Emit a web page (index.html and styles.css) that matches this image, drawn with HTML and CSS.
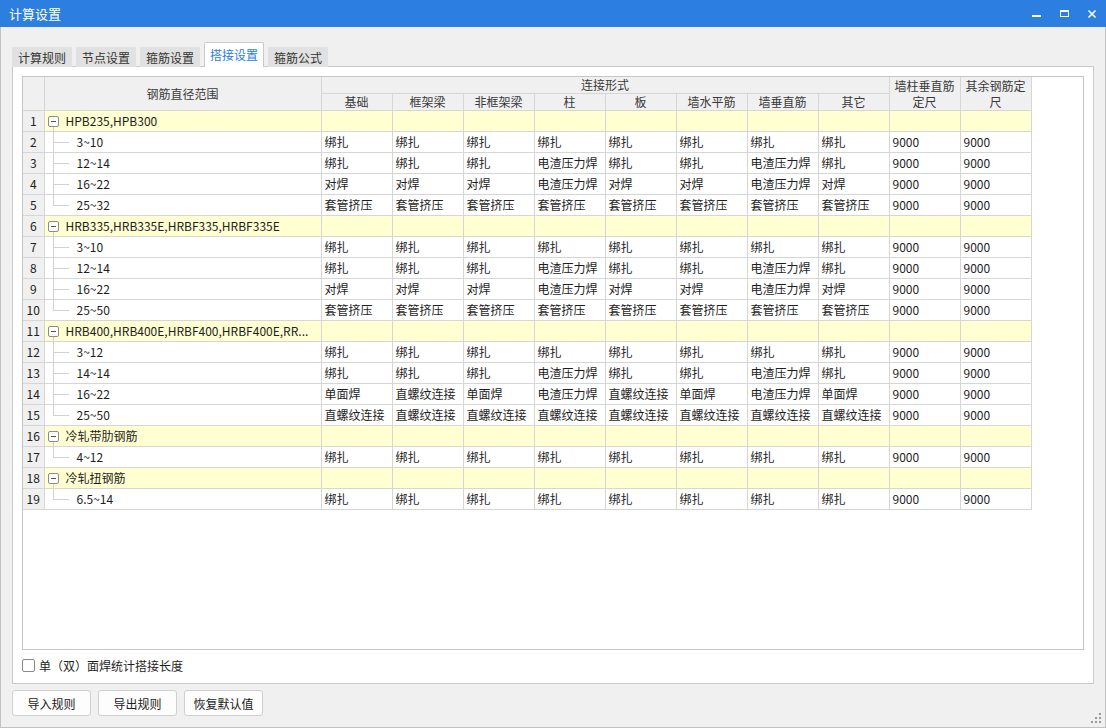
FILE: index.html
```html
<!DOCTYPE html>
<html lang="zh">
<head>
<meta charset="utf-8">
<title>计算设置</title>
<link rel="stylesheet" href="styles.css">
</head>
<body>
<div class="window">
  <div class="titlebar">
    <span class="title">计算设置</span>
    <div class="winbtns">
      <svg class="wb" width="28" height="27" viewBox="0 0 28 27"><rect x="10" y="15" width="9" height="2" fill="#fff"/></svg>
      <svg class="wb" width="28" height="27" viewBox="0 0 28 27"><rect x="10.5" y="10.5" width="8" height="6" fill="none" stroke="#fff" stroke-width="1"/><rect x="10" y="10" width="9" height="2" fill="#fff"/></svg>
      <svg class="wb" width="28" height="27" viewBox="0 0 28 27"><path d="M10.5 10.5 L17.5 17.5 M17.5 10.5 L10.5 17.5" stroke="#fff" stroke-width="1.6" fill="none"/></svg>
    </div>
  </div>
  <div class="body">
    <div class="tabs">
      <div class="tab">计算规则</div>
      <div class="tab">节点设置</div>
      <div class="tab">箍筋设置</div>
      <div class="tab active">搭接设置</div>
      <div class="tab">箍筋公式</div>
    </div>
    <div class="panel">
      <div class="grid">
        <table class="tbl">
          <colgroup>
            <col class="c-num"><col class="c-name">
            <col class="c-d"><col class="c-d"><col class="c-d"><col class="c-d"><col class="c-d"><col class="c-d"><col class="c-d"><col class="c-d">
            <col class="c-d"><col class="c-d">
          </colgroup>
          <thead>
            <tr class="h1">
              <th class="hnum" rowspan="2"></th>
              <th rowspan="2">钢筋直径范围</th>
              <th colspan="8">连接形式</th>
              <th rowspan="2" class="wrap">墙柱垂直筋定尺</th>
              <th rowspan="2" class="wrap">其余钢筋定尺</th>
            </tr>
            <tr class="h2">
              <th>基础</th><th>框架梁</th><th>非框架梁</th><th>柱</th><th>板</th><th>墙水平筋</th><th>墙垂直筋</th><th>其它</th>
            </tr>
          </thead>
          <tbody>
            <tr class="grp"><td class="num">1</td><td class="name"><div class="nm"><span class="tcol"><span class="toggle"></span></span><span class="gtxt">HPB235,HPB300</span></div></td><td></td><td></td><td></td><td></td><td></td><td></td><td></td><td></td><td></td><td></td></tr>
            <tr><td class="num">2</td><td class="name"><div class="nm"><span class="branch"></span>3~10</div></td><td>绑扎</td><td>绑扎</td><td>绑扎</td><td>绑扎</td><td>绑扎</td><td>绑扎</td><td>绑扎</td><td>绑扎</td><td>9000</td><td>9000</td></tr>
            <tr><td class="num">3</td><td class="name"><div class="nm"><span class="branch"></span>12~14</div></td><td>绑扎</td><td>绑扎</td><td>绑扎</td><td>电渣压力焊</td><td>绑扎</td><td>绑扎</td><td>电渣压力焊</td><td>绑扎</td><td>9000</td><td>9000</td></tr>
            <tr><td class="num">4</td><td class="name"><div class="nm"><span class="branch"></span>16~22</div></td><td>对焊</td><td>对焊</td><td>对焊</td><td>电渣压力焊</td><td>对焊</td><td>对焊</td><td>电渣压力焊</td><td>对焊</td><td>9000</td><td>9000</td></tr>
            <tr><td class="num">5</td><td class="name"><div class="nm"><span class="branch last"></span>25~32</div></td><td>套管挤压</td><td>套管挤压</td><td>套管挤压</td><td>套管挤压</td><td>套管挤压</td><td>套管挤压</td><td>套管挤压</td><td>套管挤压</td><td>9000</td><td>9000</td></tr>
            <tr class="grp"><td class="num">6</td><td class="name"><div class="nm"><span class="tcol"><span class="toggle"></span></span><span class="gtxt">HRB335,HRB335E,HRBF335,HRBF335E</span></div></td><td></td><td></td><td></td><td></td><td></td><td></td><td></td><td></td><td></td><td></td></tr>
            <tr><td class="num">7</td><td class="name"><div class="nm"><span class="branch"></span>3~10</div></td><td>绑扎</td><td>绑扎</td><td>绑扎</td><td>绑扎</td><td>绑扎</td><td>绑扎</td><td>绑扎</td><td>绑扎</td><td>9000</td><td>9000</td></tr>
            <tr><td class="num">8</td><td class="name"><div class="nm"><span class="branch"></span>12~14</div></td><td>绑扎</td><td>绑扎</td><td>绑扎</td><td>电渣压力焊</td><td>绑扎</td><td>绑扎</td><td>电渣压力焊</td><td>绑扎</td><td>9000</td><td>9000</td></tr>
            <tr><td class="num">9</td><td class="name"><div class="nm"><span class="branch"></span>16~22</div></td><td>对焊</td><td>对焊</td><td>对焊</td><td>电渣压力焊</td><td>对焊</td><td>对焊</td><td>电渣压力焊</td><td>对焊</td><td>9000</td><td>9000</td></tr>
            <tr><td class="num">10</td><td class="name"><div class="nm"><span class="branch last"></span>25~50</div></td><td>套管挤压</td><td>套管挤压</td><td>套管挤压</td><td>套管挤压</td><td>套管挤压</td><td>套管挤压</td><td>套管挤压</td><td>套管挤压</td><td>9000</td><td>9000</td></tr>
            <tr class="grp"><td class="num">11</td><td class="name"><div class="nm"><span class="tcol"><span class="toggle"></span></span><span class="gtxt">HRB400,HRB400E,HRBF400,HRBF400E,RR...</span></div></td><td></td><td></td><td></td><td></td><td></td><td></td><td></td><td></td><td></td><td></td></tr>
            <tr><td class="num">12</td><td class="name"><div class="nm"><span class="branch"></span>3~12</div></td><td>绑扎</td><td>绑扎</td><td>绑扎</td><td>绑扎</td><td>绑扎</td><td>绑扎</td><td>绑扎</td><td>绑扎</td><td>9000</td><td>9000</td></tr>
            <tr><td class="num">13</td><td class="name"><div class="nm"><span class="branch"></span>14~14</div></td><td>绑扎</td><td>绑扎</td><td>绑扎</td><td>电渣压力焊</td><td>绑扎</td><td>绑扎</td><td>电渣压力焊</td><td>绑扎</td><td>9000</td><td>9000</td></tr>
            <tr><td class="num">14</td><td class="name"><div class="nm"><span class="branch"></span>16~22</div></td><td>单面焊</td><td>直螺纹连接</td><td>单面焊</td><td>电渣压力焊</td><td>直螺纹连接</td><td>单面焊</td><td>电渣压力焊</td><td>单面焊</td><td>9000</td><td>9000</td></tr>
            <tr><td class="num">15</td><td class="name"><div class="nm"><span class="branch last"></span>25~50</div></td><td>直螺纹连接</td><td>直螺纹连接</td><td>直螺纹连接</td><td>直螺纹连接</td><td>直螺纹连接</td><td>直螺纹连接</td><td>直螺纹连接</td><td>直螺纹连接</td><td>9000</td><td>9000</td></tr>
            <tr class="grp"><td class="num">16</td><td class="name"><div class="nm"><span class="tcol"><span class="toggle"></span></span><span class="gtxt">冷轧带肋钢筋</span></div></td><td></td><td></td><td></td><td></td><td></td><td></td><td></td><td></td><td></td><td></td></tr>
            <tr><td class="num">17</td><td class="name"><div class="nm"><span class="branch last"></span>4~12</div></td><td>绑扎</td><td>绑扎</td><td>绑扎</td><td>绑扎</td><td>绑扎</td><td>绑扎</td><td>绑扎</td><td>绑扎</td><td>9000</td><td>9000</td></tr>
            <tr class="grp"><td class="num">18</td><td class="name"><div class="nm"><span class="tcol"><span class="toggle"></span></span><span class="gtxt">冷轧扭钢筋</span></div></td><td></td><td></td><td></td><td></td><td></td><td></td><td></td><td></td><td></td><td></td></tr>
            <tr><td class="num">19</td><td class="name"><div class="nm"><span class="branch last"></span>6.5~14</div></td><td>绑扎</td><td>绑扎</td><td>绑扎</td><td>绑扎</td><td>绑扎</td><td>绑扎</td><td>绑扎</td><td>绑扎</td><td>9000</td><td>9000</td></tr>
          </tbody>
        </table>
      </div>
      <label class="check-row"><span class="checkbox"></span><span>单（双）面焊统计搭接长度</span></label>
    </div>
    <div class="buttons">
      <button class="btn">导入规则</button>
      <button class="btn">导出规则</button>
      <button class="btn">恢复默认值</button>
    </div>
    <svg class="grip" width="12" height="12" viewBox="0 0 12 12">
      <rect x="8" y="0" width="2" height="2" fill="#9a9a9a"/>
      <rect x="4" y="4" width="2" height="2" fill="#9a9a9a"/>
      <rect x="8" y="4" width="2" height="2" fill="#9a9a9a"/>
      <rect x="0" y="8" width="2" height="2" fill="#9a9a9a"/>
      <rect x="4" y="8" width="2" height="2" fill="#9a9a9a"/>
      <rect x="8" y="8" width="2" height="2" fill="#9a9a9a"/>
    </svg>
  </div>
</div>
</body>
</html>
```

FILE: styles.css
```css
* { box-sizing: border-box; }
html, body { margin: 0; padding: 0; }
body {
  width: 1106px;
  height: 728px;
  overflow: hidden;
  background: #f0f0f0;
  font-family: "Noto Sans CJK SC", "Microsoft YaHei", sans-serif;
  font-size: 12px;
  color: #1e1e1e;
}
.window {
  width: 1106px;
  height: 728px;
  display: flex;
  flex-direction: column;
}
.titlebar {
  height: 27px;
  flex: none;
  background: #2c7fe0;
  color: #fff;
  display: flex;
  align-items: center;
  justify-content: space-between;
  padding-left: 9px;
}
.title { font-size: 13px; line-height: 27px; }
.winbtns { display: flex; }
.wb { display: block; }
.body {
  position: relative;
  flex: 1;
  border: 1px solid #c2c2c2;
  border-top: none;
  padding: 15px 11px 0 11px;
  display: flex;
  flex-direction: column;
}
.tabs {
  display: flex;
  align-items: flex-end;
  gap: 4px;
  height: 25px;
  position: relative;
  z-index: 1;
  margin-bottom: -1px;
}
.tab {
  width: 60px;
  height: 20px;
  background: #e1e1e1;
  border: 1px solid #e1e1e1;
  border-bottom: none;
  border-radius: 2px 2px 0 0;
  color: #333;
  text-align: center;
  line-height: 19px;
  font-size: 12px;
}
.tab.active {
  height: 25px;
  background: #fff;
  border-color: #cacaca;
  color: #2a7de1;
  line-height: 24px;
}
.panel {
  background: #fff;
  border: 1px solid #cacaca;
  width: 1082px;
  height: 618px;
  padding: 9px 9px 3px 9px;
  display: flex;
  flex-direction: column;
}
.grid {
  height: 574px;
  flex: none;
  border: 1px solid #c6c6c6;
  background: #fff;
  overflow: hidden;
}
.tbl {
  border-collapse: collapse;
  table-layout: fixed;
  width: 1008px;
  border-top-style: hidden;
  border-left-style: hidden;
}
.c-num { width: 21px; }
.c-name { width: 277px; }
.c-d { width: 71px; }
.tbl th, .tbl td {
  border: 1px solid #d6d6d6;
  padding: 0;
  font-weight: normal;
  white-space: nowrap;
  overflow: hidden;
}
.tbl th {
  background: #f0f0f0;
  color: #3a3a3a;
  text-align: center;
  height: 16px;
  line-height: 16px;
  font-size: 12px;
}
.tbl th.wrap {
  white-space: normal;
  line-height: 16px;
  padding: 0 2px;
}
.tbl td {
  height: 20px;
  line-height: 20px;
  padding-left: 3px;
}
.tbl td.num {
  background: #f0f0f0;
  text-align: center;
  padding: 0;
  color: #222;
}
.tbl tr.grp td { background: #ffffd2; }
.tbl tr.grp td.num { background: #f0f0f0; }
.tbl td.name { padding-left: 0; }
.nm {
  display: flex;
  align-items: center;
  height: 20px;
  overflow: hidden;
}
.tcol {
  width: 11px;
  margin-left: 3px;
  margin-right: 7px;
  align-self: stretch;
  display: flex;
  align-items: center;
  flex: none;
  background: linear-gradient(#d2d2d2, #d2d2d2) center bottom / 1px 50% no-repeat;
}
.toggle {
  width: 11px;
  height: 11px;
  border: 1px solid #8c8c8c;
  border-radius: 2px;
  background: #fff linear-gradient(#555, #555) center / 5px 1px no-repeat;
}
.gtxt {
  white-space: nowrap;
}
.branch {
  width: 16px;
  margin-left: 8px;
  margin-right: 8px;
  align-self: stretch;
  flex: none;
  margin-top: -1px;
  margin-bottom: -1px;
  background:
    linear-gradient(#d2d2d2, #d2d2d2) left top / 1px 100% no-repeat,
    linear-gradient(#d2d2d2, #d2d2d2) left center / 100% 1px no-repeat;
}
.branch.last {
  background-size: 1px 50%, 100% 1px;
}
.check-row {
  height: 30px;
  flex: none;
  display: flex;
  align-items: center;
  color: #1e1e1e;
}
.checkbox {
  width: 13px;
  height: 13px;
  border: 1px solid #8a8a8a;
  border-radius: 2px;
  background: #fff;
  margin-right: 4px;
}
.buttons {
  display: flex;
  gap: 7px;
  margin-top: 6px;
}
.btn {
  width: 79px;
  height: 26px;
  background: #fdfdfd;
  border: 1px solid #d0d0d0;
  border-radius: 3px;
  font-family: "Noto Sans CJK SC", "Microsoft YaHei", sans-serif;
  font-size: 12px;
  color: #222;
  padding: 0;
}
.grip {
  position: absolute;
  right: 2px;
  bottom: 2px;
}
```
